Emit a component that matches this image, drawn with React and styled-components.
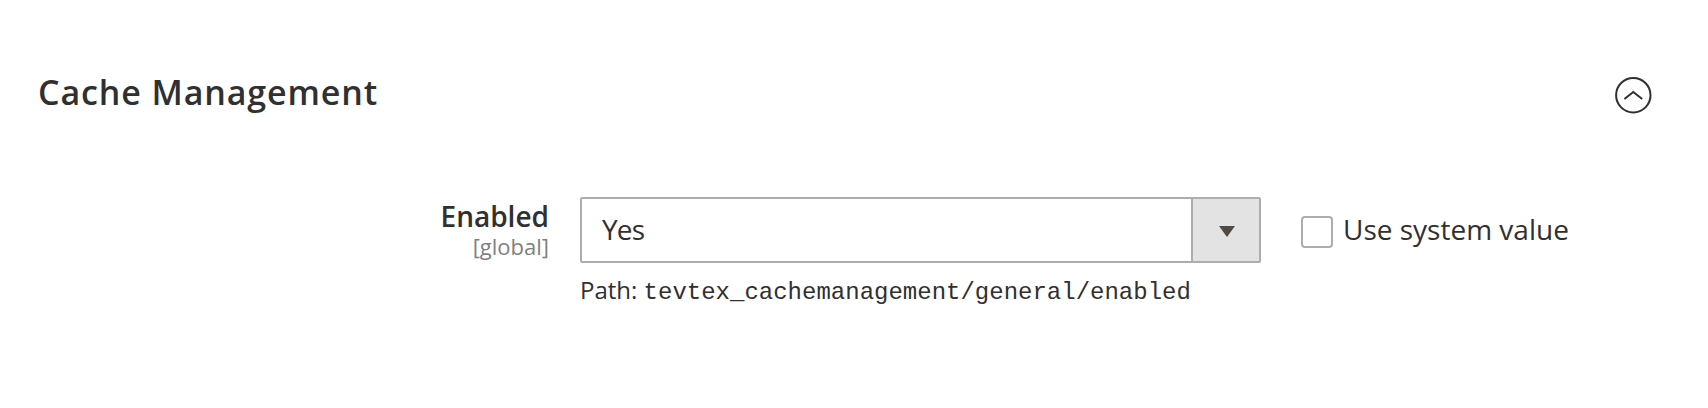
import React from 'react';
import styled, { createGlobalStyle } from 'styled-components';

const Global = createGlobalStyle`
  * { box-sizing: border-box; }
  body { margin: 0; background: #fff; color: #303030; font-family: "Open Sans", sans-serif; }
`;
const Section = styled.section`
  height: 408px;
  padding: 67px 56px 0 38px;
`;
const Header = styled.header`
  display: flex;
  justify-content: space-between;
  height: 50px;
`;
const Title = styled.h2`
  margin: 0;
  font-size: 34px;
  line-height: 50px;
  font-weight: 600;
  letter-spacing: 0.88px;
`;
const Toggle = styled.button`
  width: 38px;
  height: 38px;
  margin-top: 9px;
  padding: 0;
  border: 0;
  background: none;
  svg { display: block; }
`;
const Row = styled.div`
  display: flex;
  padding-top: 80px;
`;
const Label = styled.div`
  width: 511px;
  padding-top: 3px;
  text-align: right;
`;
const Name = styled.div`
  font-size: 28px;
  line-height: 32px;
  font-weight: 600;
`;
const Scope = styled.div`
  font-size: 22px;
  line-height: 28px;
  color: #808080;
`;
const Field = styled.div`
  width: 681px;
  margin-left: 31px;
`;
const Select = styled.div`
  display: flex;
  height: 66px;
  border: 2px solid #adadad;
  border-radius: 2px;
`;
const Value = styled.div`
  flex: 1;
  padding-left: 20px;
  font-size: 28px;
  line-height: 60px;
  letter-spacing: -0.8px;
`;
const Arrow = styled.div`
  display: flex;
  align-items: center;
  justify-content: center;
  width: 68px;
  padding: 3px 0 0 2px;
  border-left: 2px solid #adadad;
  background: #e3e3e3;
`;
const Note = styled.div`
  margin-top: 10px;
  font-size: 24px;
  line-height: 34px;
  white-space: nowrap;
`;
const Code = styled.code`
  font-family: "Courier", "Courier New", "Liberation Mono", monospace;
  font-size: 24px;
`;
const Inherit = styled.label`
  display: flex;
  height: 66px;
  margin-left: 40px;
  font-size: 28px;
  line-height: 64px;
`;
const Box = styled.span`
  width: 32px;
  height: 32px;
  margin: 19px 10px 0 0;
  border: 2px solid #adadad;
  border-radius: 4px;
`;

export default function App() {
  return (
    <Section>
      <Global />
      <Header>
        <Title>Cache Management</Title>
        <Toggle aria-label="Collapse">
          <svg width="38" height="38" viewBox="0 0 38 38" fill="none" stroke="#303030" strokeWidth="2">
            <circle cx="19.3" cy="19.2" r="17.2" />
            <path d="M10.4 23l8.9-7 8.9 7" />
          </svg>
        </Toggle>
      </Header>
      <Row>
        <Label>
          <Name>Enabled</Name>
          <Scope>[global]</Scope>
        </Label>
        <Field>
          <Select>
            <Value>Yes</Value>
            <Arrow>
              <svg width="16" height="11" viewBox="0 0 16 11"><path d="M0 0h16L8 11z" fill="#514943" /></svg>
            </Arrow>
          </Select>
          <Note>Path: <Code>tevtex_cachemanagement/general/enabled</Code></Note>
        </Field>
        <Inherit><Box />Use system value</Inherit>
      </Row>
    </Section>
  );
}
